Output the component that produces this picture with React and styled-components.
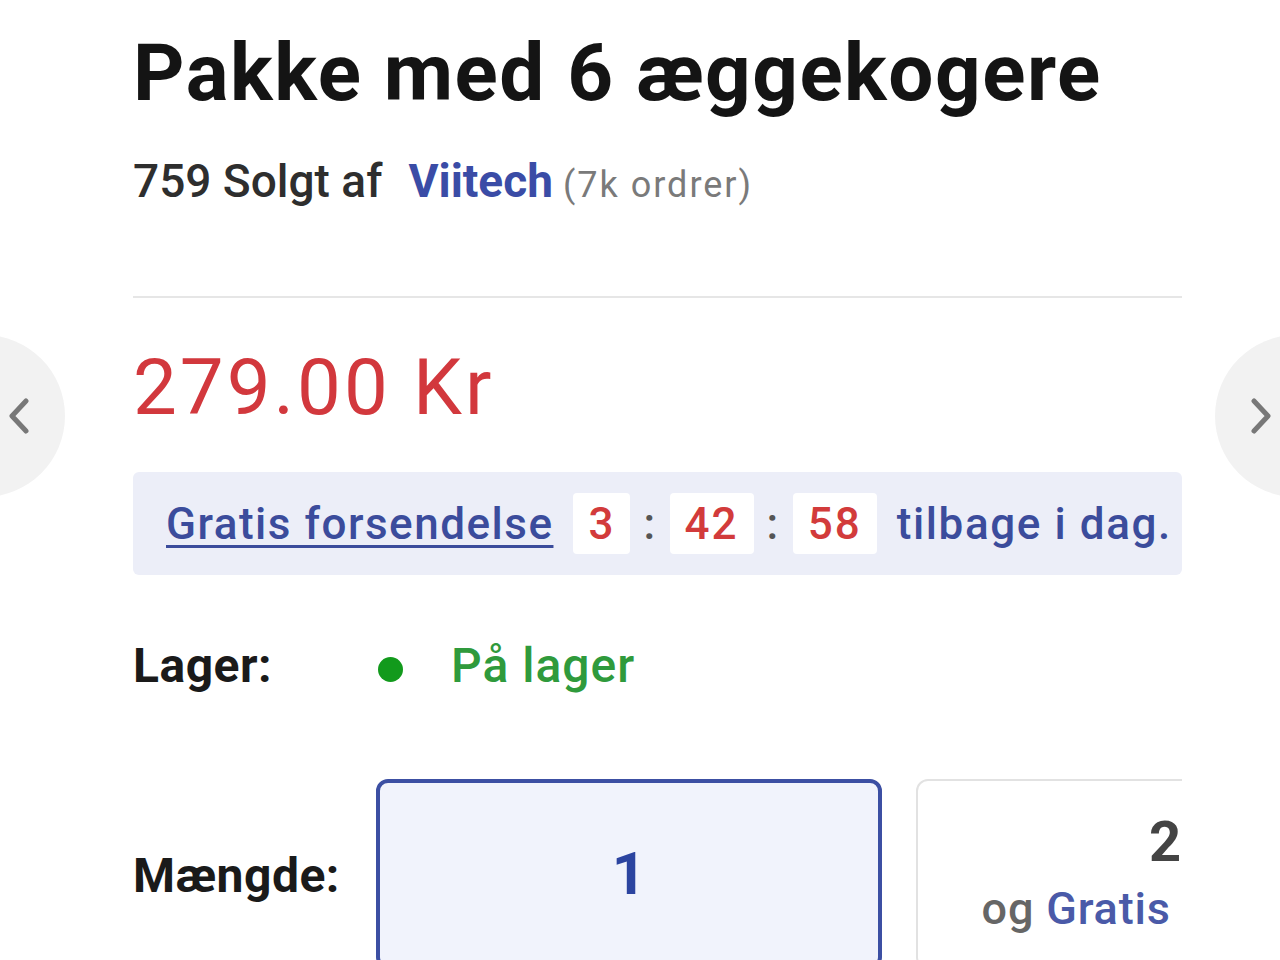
import styled, { createGlobalStyle } from "styled-components";

const GlobalStyle = createGlobalStyle`
  html, body {
    margin: 0;
    padding: 0;
    background: #ffffff;
  }
  body {
    font-family: Roboto, "Liberation Sans", sans-serif;
    color: #1c1c1c;
  }
`;

const Page = styled.div`
  position: relative;
  width: 1280px;
  height: 960px;
  overflow: hidden;
  background: #fff;
`;

const NavButton = styled.button`
  position: absolute;
  top: 335px;
  ${(p) => (p.$side === "left" ? "left: -97px;" : "right: -97px;")}
  width: 162px;
  height: 162px;
  border: none;
  border-radius: 50%;
  background: #f2f2f2;
  padding: 0;
  display: flex;
  align-items: center;
  justify-content: ${(p) => (p.$side === "left" ? "flex-end" : "flex-start")};
  padding-${(p) => (p.$side === "left" ? "right" : "left")}: 35px;
  box-sizing: border-box;
  svg {
    width: 22px;
    height: 36px;
  }
`;

const Panel = styled.main`
  margin-left: 133px;
  width: 1049px;
  overflow: hidden;
  padding-top: 25px;
`;

const Title = styled.h1`
  margin: 0;
  font-size: 80px;
  line-height: 96px;
  font-weight: 700;
  letter-spacing: 1.5px;
  color: #141414;
  white-space: nowrap;
`;

const SoldLine = styled.div`
  margin-top: 32px;
  font-size: 46px;
  line-height: 56px;
  font-weight: 500;
  color: #2e2e2e;
  white-space: nowrap;
`;

const Seller = styled.span`
  margin-left: 26px;
  color: #3a4ca6;
  font-weight: 700;
`;

const Orders = styled.span`
  margin-left: 10px;
  font-size: 36px;
  font-weight: 400;
  letter-spacing: 2px;
  color: #7a7a7a;
`;

const Divider = styled.hr`
  margin: 83px 0 0;
  border: none;
  height: 2px;
  background: #e6e6e6;
`;

const Price = styled.div`
  margin-top: 45px;
  font-size: 78px;
  line-height: 90px;
  font-weight: 400;
  letter-spacing: 3px;
  color: #d2383d;
`;

const Banner = styled.div`
  margin-top: 39px;
  height: 103px;
  box-sizing: border-box;
  padding-left: 33px;
  background: #eceef8;
  border-radius: 6px;
  display: flex;
  align-items: center;
  font-size: 44px;
  font-weight: 500;
  letter-spacing: 1.5px;
  color: #3b4c9c;
  white-space: nowrap;
`;

const ShipLink = styled.a`
  color: inherit;
  text-decoration: underline;
  text-decoration-thickness: 3px;
  text-underline-offset: 6px;
  margin-right: 20px;
`;

const TimeBox = styled.span`
  display: inline-flex;
  align-items: center;
  justify-content: center;
  height: 61px;
  padding: 0 15px;
  background: #ffffff;
  border-radius: 4px;
  color: #d23b3b;
  letter-spacing: 2px;
`;

const Colon = styled.span`
  padding: 0 13px;
  color: #555;
`;

const Remaining = styled.span`
  margin-left: 20px;
  letter-spacing: 1.6px;
`;

const InfoRow = styled.div`
  display: grid;
  grid-template-columns: 243px 1fr;
  align-items: ${(p) => p.$align || "center"};
  margin-top: ${(p) => p.$gap}px;
`;

const Label = styled.div`
  font-size: 48px;
  line-height: 56px;
  font-weight: 700;
  letter-spacing: 0.5px;
  color: #1a1a1a;
  padding-top: ${(p) => p.$offset || 0}px;
`;

const Stock = styled.div`
  display: flex;
  align-items: center;
  font-size: 48px;
  line-height: 56px;
  font-weight: 500;
  letter-spacing: 1px;
  color: #2f9a3c;
`;

const Dot = styled.span`
  width: 25px;
  height: 25px;
  margin-left: 2px;
  border-radius: 50%;
  background: #129a1c;
  margin-right: 48px;
  margin-top: 6px;
`;

const Options = styled.div`
  display: flex;
  gap: 34px;
`;

const Option = styled.div`
  flex: 0 0 ${(p) => p.$width || 506}px;
  height: 190px;
  box-sizing: border-box;
  border: ${(p) => (p.$active ? "4px solid #3c4fa3" : "2px solid #e2e2e2")};
  background: ${(p) => (p.$active ? "#f1f3fc" : "#ffffff")};
  border-radius: 12px;
  display: flex;
  flex-direction: column;
  align-items: center;
  justify-content: ${(p) => (p.$active ? "center" : "flex-start")};
  padding-top: ${(p) => (p.$active ? 0 : 31)}px;
`;

const Qty = styled.div`
  font-size: ${(p) => (p.$active ? 60 : 56)}px;
  line-height: 60px;
  font-weight: 700;
  color: ${(p) => (p.$active ? "#2c44a0" : "#444")};
`;

const Extra = styled.div`
  margin-top: 7px;
  font-size: 45px;
  line-height: 60px;
  font-weight: 500;
  letter-spacing: 0.8px;
  color: #666;
  white-space: nowrap;
  span {
    color: #4a5aa8;
  }
`;

const Chevron = ({ dir }) => (
  <svg viewBox="0 0 22 36" fill="none">
    <polyline
      points={dir === "left" ? "18,3 4,18 18,33" : "4,3 18,18 4,33"}
      stroke="#787878"
      strokeWidth="5"
      strokeLinecap="round"
      strokeLinejoin="round"
    />
  </svg>
);

const App = () => {
  return (
    <Page>
      <GlobalStyle />
      <NavButton $side="left" aria-label="Forrige">
        <Chevron dir="left" />
      </NavButton>
      <NavButton $side="right" aria-label="Næste">
        <Chevron dir="right" />
      </NavButton>

      <Panel>
        <Title>Pakke med 6 æggekogere</Title>
        <SoldLine>
          759 Solgt af
          <Seller>Viitech</Seller>
          <Orders>(7k ordrer)</Orders>
        </SoldLine>
        <Divider />
        <Price>279.00 Kr</Price>

        <Banner>
          <ShipLink href="#">Gratis forsendelse</ShipLink>
          <TimeBox>3</TimeBox>
          <Colon>:</Colon>
          <TimeBox>42</TimeBox>
          <Colon>:</Colon>
          <TimeBox>58</TimeBox>
          <Remaining>tilbage i dag.</Remaining>
        </Banner>

        <InfoRow $gap={63}>
          <Label>Lager:</Label>
          <Stock>
            <Dot />
            På lager
          </Stock>
        </InfoRow>

        <InfoRow $gap={85} $align="start">
          <Label $offset={69}>Mængde:</Label>
          <Options>
            <Option $active>
              <Qty $active>1</Qty>
            </Option>
            <Option $width={498}>
              <Qty>2</Qty>
              <Extra>
                og <span>Gratis levering</span>
              </Extra>
            </Option>
          </Options>
        </InfoRow>
      </Panel>
    </Page>
  );
};

export default App;
